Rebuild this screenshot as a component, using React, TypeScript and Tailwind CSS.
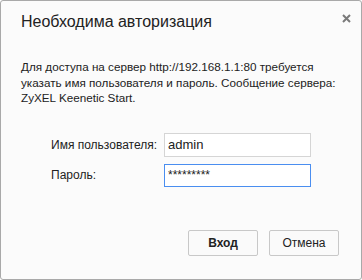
export default function App() {
  return (
    <div className="w-[362px] h-[280px] bg-white">
      <div
        className="relative w-[362px] h-[280px] border border-[#a9a9a9] rounded-[3px] bg-[#fbfbfb] text-[#222]"
        style={{ fontFamily: '"Liberation Sans", Arial, sans-serif' }}
      >
        <button className="absolute right-[9px] top-[11px] w-[12px] h-[12px] flex items-center justify-center">
          <svg width="9" height="9" viewBox="0 0 9 9">
            <path d="M1 1 L8 8 M8 1 L1 8" stroke="#7a7a7a" strokeWidth="2" />
          </svg>
        </button>

        <h1 className="pt-[10px] pl-[20px] text-[16px] leading-[22px] font-normal">
          Необходима авторизация
        </h1>

        <p className="mt-[26px] pl-[20px] text-[11.7px] leading-[15.5px] whitespace-nowrap">
          Для доступа на сервер http://192.168.1.1:80 требуется
          <br />
          указать имя пользователя и пароль. Сообщение сервера:
          <br />
          ZyXEL Keenetic Start.
        </p>

        <div className="mt-[27px] ml-[50px] grid grid-cols-[113px_147px] gap-y-[7px] items-center text-[12px]">
          <label>Имя пользователя:</label>
          <input
            defaultValue="admin"
            className="h-[24px] border border-[#d5d5d5] bg-white px-[3px] text-[13px] outline-none"
          />
          <label>Пароль:</label>
          <input
            defaultValue="*********"
            className="h-[23px] border border-[#4a8ef0] bg-white px-[3px] text-[12px] outline-none"
          />
        </div>

        <div className="mt-[43px] flex justify-end gap-[11px] pr-[22px] text-[12px]">
          <button className="w-[70px] h-[26px] border border-[#c8c8c8] rounded-[2px] bg-[#fafafa] font-bold">
            Вход
          </button>
          <button className="w-[70px] h-[26px] border border-[#c8c8c8] rounded-[2px] bg-[#fafafa]">
            Отмена
          </button>
        </div>
      </div>
    </div>
  );
}
